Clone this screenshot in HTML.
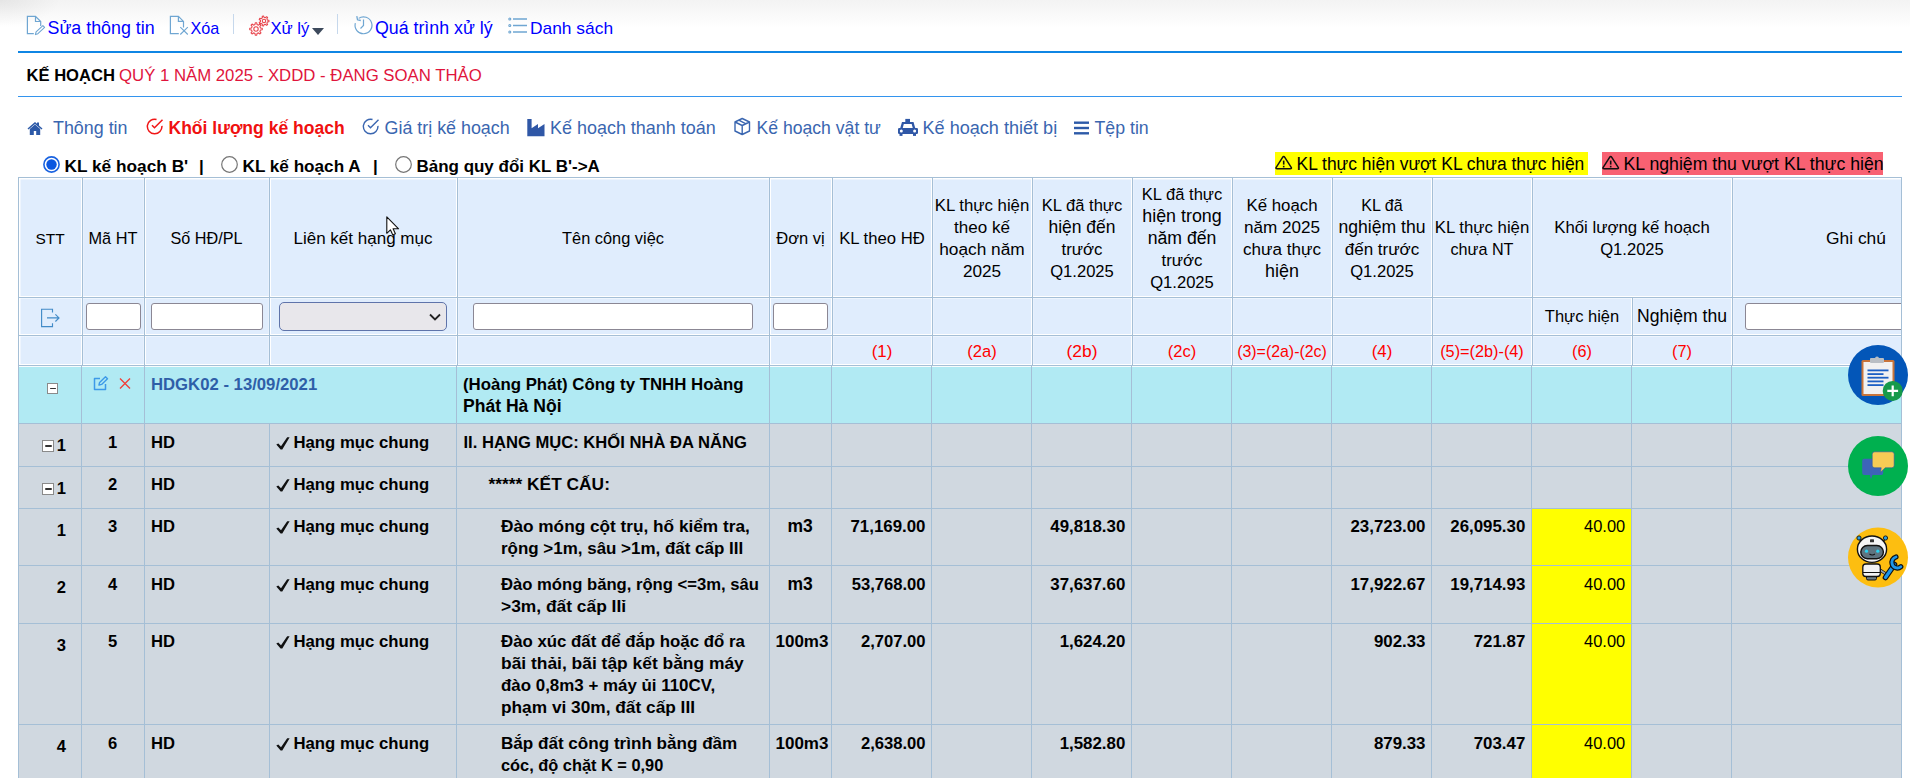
<!DOCTYPE html>
<html><head><meta charset="utf-8"><style>
html,body{margin:0;padding:0;background:#fff;width:1910px;height:778px;overflow:hidden;position:relative;font-family:"Liberation Sans",sans-serif}
.t{position:absolute;white-space:nowrap}
.r{position:absolute}
</style></head><body>
<div class="r" style="left:0;top:0;width:1910px;height:28px;background:linear-gradient(#f3f3f3,#fff)"></div>
<div class="r" style="left:0;top:0;width:60px;height:30px;background:radial-gradient(ellipse 60px 26px at 0 0,rgba(0,0,0,0.06),rgba(0,0,0,0))"></div>
<div class="t" style="left:47.5px;top:16.75px;font-size:17.84px;line-height:22px;color:#0000ff;">Sửa thông tin</div>
<div class="t" style="left:190.5px;top:16.75px;font-size:16.21px;line-height:22px;color:#0000ff;">Xóa</div>
<div class="t" style="left:270.5px;top:17.75px;font-size:16.64px;line-height:22px;color:#0000ff;">Xử lý</div>
<div class="t" style="left:375px;top:16.75px;font-size:17.78px;line-height:22px;color:#0000ff;">Quá trình xử lý</div>
<div class="t" style="left:530px;top:16.75px;font-size:17.39px;line-height:22px;color:#0000ff;">Danh sách</div>
<div class="r" style="left:233px;top:14px;width:1px;height:20px;background:#c6d8ec;"></div>
<div class="r" style="left:337px;top:14px;width:1px;height:20px;background:#c6d8ec;"></div>
<svg class="r" style="left:26px;top:15px" width="22" height="21" viewBox="0 0 22 21">
<path d="M7.8 18.6H1.4V1.3H9.5L14.7 6.5V11M9.5 1.3V6.5H14.7" fill="none" stroke="#6fa6d2" stroke-width="1.2"/>
<path d="M9.4 19.6L10.1 16.9L16.9 10.6L18.6 12.3L11.9 18.7Z" fill="none" stroke="#6fa6d2" stroke-width="1.1" stroke-linejoin="round"/>
</svg>
<svg class="r" style="left:169px;top:15px" width="21" height="21" viewBox="0 0 21 21">
<path d="M9.8 18.6H1.4V1.3H9.4L14.5 6.4V12.5M9.4 1.3V6.4H14.5" fill="none" stroke="#6fa6d2" stroke-width="1.2"/>
<path d="M11.3 12.2L18.8 19.5M18.8 12.2L11.3 19.5" fill="none" stroke="#6fa6d2" stroke-width="1.1"/>
</svg>
<svg class="r" style="left:248px;top:14px" width="24" height="24" viewBox="0 0 24 24">
<g fill="none" stroke="#e8474e" stroke-width="1.1" stroke-linejoin="round">
<path d="M12.49 14.01L14.26 14.26L14.26 15.74L12.49 15.99L11.87 17.48L12.95 18.90L11.90 19.95L10.48 18.87L8.99 19.49L8.74 21.26L7.26 21.26L7.01 19.49L5.52 18.87L4.10 19.95L3.05 18.90L4.13 17.48L3.51 15.99L1.74 15.74L1.74 14.26L3.51 14.01L4.13 12.52L3.05 11.10L4.10 10.05L5.52 11.13L7.01 10.51L7.26 8.74L8.74 8.74L8.99 10.51L10.48 11.13L11.90 10.05L12.95 11.10L11.87 12.52Z"/><circle cx="8" cy="15" r="2.2"/>
<path d="M19.49 6.12L20.95 6.33L20.95 7.67L19.49 7.88L18.86 9.18L19.61 10.46L18.56 11.29L17.49 10.28L16.08 10.60L15.55 11.98L14.24 11.68L14.37 10.21L13.24 9.31L11.83 9.75L11.24 8.55L12.47 7.72L12.47 6.28L11.24 5.45L11.83 4.25L13.24 4.69L14.37 3.79L14.24 2.32L15.55 2.02L16.08 3.40L17.49 3.72L18.56 2.71L19.61 3.54L18.86 4.82Z"/><circle cx="16" cy="7" r="1.7"/>
</g></svg>
<svg class="r" style="left:312px;top:28px" width="12" height="8" viewBox="0 0 12 8"><path d="M0 0h12L6 7z" fill="#3d4a5c"/></svg>
<svg class="r" style="left:353px;top:15px" width="21" height="21" viewBox="0 0 21 21">
<path d="M5.65 3.38A8.45 8.45 0 1 1 2.34 8.1" fill="none" stroke="#6fa6d2" stroke-width="1.2"/>
<path d="M3.8 1.2L4.5 4.8L7.8 5.5" fill="none" stroke="#6fa6d2" stroke-width="1.3"/>
<path d="M10.5 4.5V10.5L7.5 13.5" fill="none" stroke="#6fa6d2" stroke-width="1.2"/>
</svg>
<svg class="r" style="left:508px;top:16.5px" width="20" height="18" viewBox="0 0 20 18">
<g fill="none" stroke="#6fa6d2" stroke-width="1.1"><circle cx="1.8" cy="2" r="1"/><circle cx="1.8" cy="8.5" r="1"/><circle cx="1.8" cy="15" r="1"/>
<path d="M5 2h14M5 8.5h14M5 15h14" stroke-width="1.5"/></g></svg>
<div class="r" style="left:18px;top:51px;width:1884px;height:2px;background:#0f86e4;"></div>
<div class="r" style="left:18px;top:96px;width:1884px;height:1px;background:#3394ee;"></div>
<div class="t" style="left:26.5px;top:65.25px;font-size:16.59px;line-height:22px;color:#000;font-weight:700;">KẾ HOẠCH</div>
<div class="t" style="left:119px;top:65.25px;font-size:16.75px;line-height:22px;color:#e0143c;">QUÝ 1 NĂM 2025 - XDDD - ĐANG SOẠN THẢO</div>
<svg class="r" style="left:27px;top:121px" width="16" height="14" viewBox="0 0 16 14">
<path d="M8 1L0.5 7.5l1 1L8 3l6.5 5.5 1-1L12 4.5V1.5h-2v1.3z" fill="#2d5aa8"/>
<path d="M2.8 8v6h4V10h2.4v4h4V8L8 3.6z" fill="#2d5aa8"/></svg>
<div class="t" style="left:53px;top:117.25px;font-size:17.89px;line-height:22px;color:#3a66b0;">Thông tin</div>
<svg class="r" style="left:146px;top:118px" width="19" height="18" viewBox="0 0 19 18">
<path d="M15.92 7.86A7.3 7.3 0 1 1 10.54 1.45" fill="none" stroke="#f01616" stroke-width="1.5"/>
<path d="M6 7.3L8.5 9.8L16.5 1.8" fill="none" stroke="#f01616" stroke-width="1.5"/></svg>
<div class="t" style="left:168.5px;top:117.25px;font-size:17.54px;line-height:22px;color:#f01010;font-weight:700;">Khối lượng kế hoạch</div>
<svg class="r" style="left:362px;top:118px" width="19" height="18" viewBox="0 0 19 18">
<path d="M15.92 7.86A7.3 7.3 0 1 1 10.54 1.45" fill="none" stroke="#3a66b0" stroke-width="1.4"/>
<path d="M6 7.3L8.5 9.8L16.5 1.8" fill="none" stroke="#3a66b0" stroke-width="1.4"/></svg>
<div class="t" style="left:384.5px;top:117.25px;font-size:17.89px;line-height:22px;color:#3a66b0;">Giá trị kế hoạch</div>
<svg class="r" style="left:527px;top:119px" width="18" height="18" viewBox="0 0 18 18">
<path d="M0.3 0.1H4.6V9.3L11 5V9.3L17.5 5V17.3H0.3Z" fill="#2f57a6"/></svg>
<div class="t" style="left:550px;top:117.25px;font-size:17.97px;line-height:22px;color:#3a66b0;">Kế hoạch thanh toán</div>
<svg class="r" style="left:733px;top:117px" width="19" height="19" viewBox="0 0 19 19">
<path d="M9.2 1.5L16.5 5V14L9.2 17.5L2 14V5Z M2 5L9.2 8.5L16.5 5 M9.2 8.5V17.5 M5.8 3.2L13 6.8" fill="none" stroke="#3a66b0" stroke-width="1.4" stroke-linejoin="round"/></svg>
<div class="t" style="left:756.5px;top:117.25px;font-size:17.63px;line-height:22px;color:#3a66b0;">Kế hoạch vật tư</div>
<svg class="r" style="left:897px;top:118px" width="22" height="19" viewBox="0 0 22 19">
<rect x="8.3" y="0.9" width="4.7" height="3.3" fill="#2f57a6"/>
<path d="M5 4H16.5L18.3 10.2H3.2Z" fill="#2f57a6"/><path d="M6.8 6H14.7L15.8 10.2H5.7Z" fill="#fff"/>
<rect x="1" y="10" width="20" height="6" rx="1.3" fill="#2f57a6"/>
<rect x="2.5" y="15.5" width="3" height="2.4" fill="#2f57a6"/><rect x="16" y="15.5" width="3" height="2.4" fill="#2f57a6"/>
<circle cx="4.3" cy="12.9" r="1.5" fill="#fff"/><circle cx="17.6" cy="12.9" r="1.5" fill="#fff"/></svg>
<div class="t" style="left:922.5px;top:117.25px;font-size:18.09px;line-height:22px;color:#3a66b0;">Kế hoạch thiết bị</div>
<svg class="r" style="left:1074px;top:121px" width="16" height="14" viewBox="0 0 16 14">
<rect x="0" y="0.5" width="15" height="2.4" fill="#2d5aa8"/><rect x="0" y="5.8" width="15" height="2.4" fill="#2d5aa8"/><rect x="0" y="11.1" width="15" height="2.4" fill="#2d5aa8"/></svg>
<div class="t" style="left:1094.5px;top:117.25px;font-size:17.74px;line-height:22px;color:#3a66b0;">Tệp tin</div>
<svg class="r" style="left:42px;top:155px" width="19" height="19" viewBox="0 0 19 19">
<circle cx="9.5" cy="9.5" r="7.6" fill="#fff" stroke="#1a63e0" stroke-width="1.6"/><circle cx="9.5" cy="9.5" r="5.2" fill="#0b57e0"/></svg>
<div class="t" style="left:64.5px;top:155.25px;font-size:17.27px;line-height:22px;color:#000;font-weight:700;">KL kế hoạch B'</div>
<div class="t" style="left:199px;top:156.25px;font-size:17px;line-height:22px;color:#000;font-weight:700;">|</div>
<svg class="r" style="left:220px;top:155px" width="19" height="19" viewBox="0 0 19 19">
<circle cx="9.5" cy="9.5" r="7.8" fill="#fff" stroke="#767676" stroke-width="1.2"/></svg>
<div class="t" style="left:242.5px;top:155.25px;font-size:17.15px;line-height:22px;color:#000;font-weight:700;">KL kế hoạch A</div>
<div class="t" style="left:373px;top:156.25px;font-size:17px;line-height:22px;color:#000;font-weight:700;">|</div>
<svg class="r" style="left:394px;top:155px" width="19" height="19" viewBox="0 0 19 19">
<circle cx="9.5" cy="9.5" r="7.8" fill="#fff" stroke="#767676" stroke-width="1.2"/></svg>
<div class="t" style="left:416.5px;top:156.25px;font-size:16.98px;line-height:22px;color:#000;font-weight:700;">Bảng quy đổi KL B'-&gt;A</div>
<div class="r" style="left:1275px;top:152px;width:313px;height:23px;background:#ffff00;"></div>
<svg class="r" style="left:1275px;top:155px" width="18" height="16" viewBox="0 0 18 16">
<path d="M7.6 2.3Q8.7 0.6 9.8 2.3L16.2 12.3Q17 13.8 15.3 13.8H2.1Q0.4 13.8 1.2 12.3Z" fill="none" stroke="#111" stroke-width="1.5" stroke-linejoin="round"/><path d="M8.7 5.6V9.6" stroke="#111" stroke-width="1.6"/><rect x="7.9" y="10.8" width="1.6" height="1.6" fill="#111"/></svg>
<div class="t" style="left:1296.5px;top:153.25px;font-size:17.47px;line-height:22px;color:#000;">KL thực hiện vượt KL chưa thực hiện</div>
<div class="r" style="left:1602px;top:152px;width:281px;height:23px;background:#f86172;"></div>
<svg class="r" style="left:1602px;top:155px" width="18" height="16" viewBox="0 0 18 16">
<path d="M7.6 2.3Q8.7 0.6 9.8 2.3L16.2 12.3Q17 13.8 15.3 13.8H2.1Q0.4 13.8 1.2 12.3Z" fill="none" stroke="#111" stroke-width="1.5" stroke-linejoin="round"/><path d="M8.7 5.6V9.6" stroke="#111" stroke-width="1.6"/><rect x="7.9" y="10.8" width="1.6" height="1.6" fill="#111"/></svg>
<div class="t" style="left:1623.5px;top:153.25px;font-size:17.7px;line-height:22px;color:#000;">KL nghiệm thu vượt KL thực hiện</div>
<div class="r" style="left:18px;top:177px;width:1883px;height:188px;background:#e0edfd;"></div>
<div class="r" style="left:18px;top:366px;width:1883px;height:58px;background:#b1eaf3;"></div>
<div class="r" style="left:18px;top:424px;width:1883px;height:43px;background:#d0d8e0;"></div>
<div class="r" style="left:18px;top:467px;width:1883px;height:42px;background:#d0d8e0;"></div>
<div class="r" style="left:18px;top:509px;width:1883px;height:57px;background:#d0d8e0;"></div>
<div class="r" style="left:18px;top:566px;width:1883px;height:58px;background:#d0d8e0;"></div>
<div class="r" style="left:18px;top:624px;width:1883px;height:101px;background:#d0d8e0;"></div>
<div class="r" style="left:18px;top:725px;width:1883px;height:156px;background:#d0d8e0;"></div>
<div class="r" style="left:1532px;top:509px;width:99px;height:56px;background:#ffff00;"></div>
<div class="r" style="left:1532px;top:566px;width:99px;height:57px;background:#ffff00;"></div>
<div class="r" style="left:1532px;top:624px;width:99px;height:100px;background:#ffff00;"></div>
<div class="r" style="left:1532px;top:725px;width:99px;height:155px;background:#ffff00;"></div>
<div class="r" style="left:81px;top:178px;width:1px;height:187px;background:#ffffff;"></div>
<div class="r" style="left:83px;top:178px;width:1px;height:187px;background:rgba(255,255,255,0.25);"></div>
<div class="r" style="left:145px;top:178px;width:1px;height:187px;background:#ffffff;"></div>
<div class="r" style="left:143px;top:178px;width:1px;height:187px;background:rgba(255,255,255,0.25);"></div>
<div class="r" style="left:270px;top:178px;width:1px;height:187px;background:#ffffff;"></div>
<div class="r" style="left:268px;top:178px;width:1px;height:187px;background:rgba(255,255,255,0.25);"></div>
<div class="r" style="left:456px;top:178px;width:1px;height:187px;background:#ffffff;"></div>
<div class="r" style="left:458px;top:178px;width:1px;height:187px;background:rgba(255,255,255,0.25);"></div>
<div class="r" style="left:770px;top:178px;width:1px;height:187px;background:#ffffff;"></div>
<div class="r" style="left:768px;top:178px;width:1px;height:187px;background:rgba(255,255,255,0.25);"></div>
<div class="r" style="left:831px;top:178px;width:1px;height:187px;background:#ffffff;"></div>
<div class="r" style="left:833px;top:178px;width:1px;height:187px;background:rgba(255,255,255,0.25);"></div>
<div class="r" style="left:931px;top:178px;width:1px;height:187px;background:#ffffff;"></div>
<div class="r" style="left:933px;top:178px;width:1px;height:187px;background:rgba(255,255,255,0.25);"></div>
<div class="r" style="left:1031px;top:178px;width:1px;height:187px;background:#ffffff;"></div>
<div class="r" style="left:1033px;top:178px;width:1px;height:187px;background:rgba(255,255,255,0.25);"></div>
<div class="r" style="left:1131px;top:178px;width:1px;height:187px;background:#ffffff;"></div>
<div class="r" style="left:1133px;top:178px;width:1px;height:187px;background:rgba(255,255,255,0.25);"></div>
<div class="r" style="left:1231px;top:178px;width:1px;height:187px;background:#ffffff;"></div>
<div class="r" style="left:1233px;top:178px;width:1px;height:187px;background:rgba(255,255,255,0.25);"></div>
<div class="r" style="left:1331px;top:178px;width:1px;height:187px;background:#ffffff;"></div>
<div class="r" style="left:1333px;top:178px;width:1px;height:187px;background:rgba(255,255,255,0.25);"></div>
<div class="r" style="left:1431px;top:178px;width:1px;height:187px;background:#ffffff;"></div>
<div class="r" style="left:1433px;top:178px;width:1px;height:187px;background:rgba(255,255,255,0.25);"></div>
<div class="r" style="left:1531px;top:178px;width:1px;height:187px;background:#ffffff;"></div>
<div class="r" style="left:1533px;top:178px;width:1px;height:187px;background:rgba(255,255,255,0.25);"></div>
<div class="r" style="left:1631px;top:297px;width:1px;height:68px;background:#ffffff;"></div>
<div class="r" style="left:1633px;top:297px;width:1px;height:68px;background:rgba(255,255,255,0.25);"></div>
<div class="r" style="left:1731px;top:178px;width:1px;height:187px;background:#ffffff;"></div>
<div class="r" style="left:1733px;top:178px;width:1px;height:187px;background:rgba(255,255,255,0.25);"></div>
<div class="r" style="left:19px;top:296px;width:1882px;height:1px;background:#ffffff;"></div>
<div class="r" style="left:19px;top:298px;width:1882px;height:1px;background:rgba(255,255,255,0.45);"></div>
<div class="r" style="left:19px;top:334px;width:1882px;height:1px;background:#ffffff;"></div>
<div class="r" style="left:19px;top:336px;width:1882px;height:1px;background:rgba(255,255,255,0.45);"></div>
<div class="r" style="left:19px;top:364px;width:1882px;height:1px;background:#ffffff;"></div>
<div class="r" style="left:19px;top:366px;width:1882px;height:1px;background:rgba(255,255,255,0.9);"></div>
<div class="r" style="left:19px;top:178px;width:1882px;height:1px;background:#ffffff;"></div>
<div class="r" style="left:19px;top:179px;width:1882px;height:1px;background:rgba(255,255,255,0.45);"></div>
<div class="r" style="left:19px;top:178px;width:1px;height:187px;background:#ffffff;"></div>
<div class="r" style="left:20px;top:178px;width:1px;height:187px;background:rgba(255,255,255,0.45);"></div>
<div class="r" style="left:18px;top:177px;width:1884px;height:1px;background:#a5bfd6;"></div>
<div class="r" style="left:18px;top:177px;width:1px;height:601px;background:#a5bfd6;"></div>
<div class="r" style="left:1901px;top:177px;width:1px;height:601px;background:#a5bfd6;"></div>
<div class="r" style="left:18px;top:297px;width:1883px;height:1px;background:#a5bfd6;"></div>
<div class="r" style="left:18px;top:335px;width:1883px;height:1px;background:#a5bfd6;"></div>
<div class="r" style="left:18px;top:365px;width:1883px;height:1px;background:#a5bfd6;"></div>
<div class="r" style="left:82px;top:177px;width:1px;height:188px;background:#a5bfd6;"></div>
<div class="r" style="left:144px;top:177px;width:1px;height:188px;background:#a5bfd6;"></div>
<div class="r" style="left:269px;top:177px;width:1px;height:188px;background:#a5bfd6;"></div>
<div class="r" style="left:457px;top:177px;width:1px;height:188px;background:#a5bfd6;"></div>
<div class="r" style="left:769px;top:177px;width:1px;height:188px;background:#a5bfd6;"></div>
<div class="r" style="left:832px;top:177px;width:1px;height:188px;background:#a5bfd6;"></div>
<div class="r" style="left:932px;top:177px;width:1px;height:188px;background:#a5bfd6;"></div>
<div class="r" style="left:1032px;top:177px;width:1px;height:188px;background:#a5bfd6;"></div>
<div class="r" style="left:1132px;top:177px;width:1px;height:188px;background:#a5bfd6;"></div>
<div class="r" style="left:1232px;top:177px;width:1px;height:188px;background:#a5bfd6;"></div>
<div class="r" style="left:1332px;top:177px;width:1px;height:188px;background:#a5bfd6;"></div>
<div class="r" style="left:1432px;top:177px;width:1px;height:188px;background:#a5bfd6;"></div>
<div class="r" style="left:1532px;top:177px;width:1px;height:188px;background:#a5bfd6;"></div>
<div class="r" style="left:1632px;top:297px;width:1px;height:68px;background:#a5bfd6;"></div>
<div class="r" style="left:1732px;top:177px;width:1px;height:188px;background:#a5bfd6;"></div>
<div class="r" style="left:81px;top:365px;width:1px;height:58px;background:#a5bfd6;"></div>
<div class="r" style="left:144px;top:365px;width:1px;height:58px;background:#a5bfd6;"></div>
<div class="r" style="left:456px;top:365px;width:1px;height:58px;background:#a5bfd6;"></div>
<div class="r" style="left:769px;top:365px;width:1px;height:58px;background:#a5bfd6;"></div>
<div class="r" style="left:831px;top:365px;width:1px;height:58px;background:#a5bfd6;"></div>
<div class="r" style="left:931px;top:365px;width:1px;height:58px;background:#a5bfd6;"></div>
<div class="r" style="left:1031px;top:365px;width:1px;height:58px;background:#a5bfd6;"></div>
<div class="r" style="left:1131px;top:365px;width:1px;height:58px;background:#a5bfd6;"></div>
<div class="r" style="left:1231px;top:365px;width:1px;height:58px;background:#a5bfd6;"></div>
<div class="r" style="left:1331px;top:365px;width:1px;height:58px;background:#a5bfd6;"></div>
<div class="r" style="left:1431px;top:365px;width:1px;height:58px;background:#a5bfd6;"></div>
<div class="r" style="left:1531px;top:365px;width:1px;height:58px;background:#a5bfd6;"></div>
<div class="r" style="left:1631px;top:365px;width:1px;height:58px;background:#a5bfd6;"></div>
<div class="r" style="left:1731px;top:365px;width:1px;height:58px;background:#a5bfd6;"></div>
<div class="r" style="left:81px;top:423px;width:1px;height:43px;background:#a5bfd6;"></div>
<div class="r" style="left:144px;top:423px;width:1px;height:43px;background:#a5bfd6;"></div>
<div class="r" style="left:269px;top:423px;width:1px;height:43px;background:#a5bfd6;"></div>
<div class="r" style="left:456px;top:423px;width:1px;height:43px;background:#a5bfd6;"></div>
<div class="r" style="left:769px;top:423px;width:1px;height:43px;background:#a5bfd6;"></div>
<div class="r" style="left:831px;top:423px;width:1px;height:43px;background:#a5bfd6;"></div>
<div class="r" style="left:931px;top:423px;width:1px;height:43px;background:#a5bfd6;"></div>
<div class="r" style="left:1031px;top:423px;width:1px;height:43px;background:#a5bfd6;"></div>
<div class="r" style="left:1131px;top:423px;width:1px;height:43px;background:#a5bfd6;"></div>
<div class="r" style="left:1231px;top:423px;width:1px;height:43px;background:#a5bfd6;"></div>
<div class="r" style="left:1331px;top:423px;width:1px;height:43px;background:#a5bfd6;"></div>
<div class="r" style="left:1431px;top:423px;width:1px;height:43px;background:#a5bfd6;"></div>
<div class="r" style="left:1531px;top:423px;width:1px;height:43px;background:#a5bfd6;"></div>
<div class="r" style="left:1631px;top:423px;width:1px;height:43px;background:#a5bfd6;"></div>
<div class="r" style="left:1731px;top:423px;width:1px;height:43px;background:#a5bfd6;"></div>
<div class="r" style="left:81px;top:466px;width:1px;height:42px;background:#a5bfd6;"></div>
<div class="r" style="left:144px;top:466px;width:1px;height:42px;background:#a5bfd6;"></div>
<div class="r" style="left:269px;top:466px;width:1px;height:42px;background:#a5bfd6;"></div>
<div class="r" style="left:456px;top:466px;width:1px;height:42px;background:#a5bfd6;"></div>
<div class="r" style="left:769px;top:466px;width:1px;height:42px;background:#a5bfd6;"></div>
<div class="r" style="left:831px;top:466px;width:1px;height:42px;background:#a5bfd6;"></div>
<div class="r" style="left:931px;top:466px;width:1px;height:42px;background:#a5bfd6;"></div>
<div class="r" style="left:1031px;top:466px;width:1px;height:42px;background:#a5bfd6;"></div>
<div class="r" style="left:1131px;top:466px;width:1px;height:42px;background:#a5bfd6;"></div>
<div class="r" style="left:1231px;top:466px;width:1px;height:42px;background:#a5bfd6;"></div>
<div class="r" style="left:1331px;top:466px;width:1px;height:42px;background:#a5bfd6;"></div>
<div class="r" style="left:1431px;top:466px;width:1px;height:42px;background:#a5bfd6;"></div>
<div class="r" style="left:1531px;top:466px;width:1px;height:42px;background:#a5bfd6;"></div>
<div class="r" style="left:1631px;top:466px;width:1px;height:42px;background:#a5bfd6;"></div>
<div class="r" style="left:1731px;top:466px;width:1px;height:42px;background:#a5bfd6;"></div>
<div class="r" style="left:81px;top:508px;width:1px;height:57px;background:#a5bfd6;"></div>
<div class="r" style="left:144px;top:508px;width:1px;height:57px;background:#a5bfd6;"></div>
<div class="r" style="left:269px;top:508px;width:1px;height:57px;background:#a5bfd6;"></div>
<div class="r" style="left:456px;top:508px;width:1px;height:57px;background:#a5bfd6;"></div>
<div class="r" style="left:769px;top:508px;width:1px;height:57px;background:#a5bfd6;"></div>
<div class="r" style="left:831px;top:508px;width:1px;height:57px;background:#a5bfd6;"></div>
<div class="r" style="left:931px;top:508px;width:1px;height:57px;background:#a5bfd6;"></div>
<div class="r" style="left:1031px;top:508px;width:1px;height:57px;background:#a5bfd6;"></div>
<div class="r" style="left:1131px;top:508px;width:1px;height:57px;background:#a5bfd6;"></div>
<div class="r" style="left:1231px;top:508px;width:1px;height:57px;background:#a5bfd6;"></div>
<div class="r" style="left:1331px;top:508px;width:1px;height:57px;background:#a5bfd6;"></div>
<div class="r" style="left:1431px;top:508px;width:1px;height:57px;background:#a5bfd6;"></div>
<div class="r" style="left:1531px;top:508px;width:1px;height:57px;background:#a5bfd6;"></div>
<div class="r" style="left:1631px;top:508px;width:1px;height:57px;background:#a5bfd6;"></div>
<div class="r" style="left:1731px;top:508px;width:1px;height:57px;background:#a5bfd6;"></div>
<div class="r" style="left:81px;top:565px;width:1px;height:58px;background:#a5bfd6;"></div>
<div class="r" style="left:144px;top:565px;width:1px;height:58px;background:#a5bfd6;"></div>
<div class="r" style="left:269px;top:565px;width:1px;height:58px;background:#a5bfd6;"></div>
<div class="r" style="left:456px;top:565px;width:1px;height:58px;background:#a5bfd6;"></div>
<div class="r" style="left:769px;top:565px;width:1px;height:58px;background:#a5bfd6;"></div>
<div class="r" style="left:831px;top:565px;width:1px;height:58px;background:#a5bfd6;"></div>
<div class="r" style="left:931px;top:565px;width:1px;height:58px;background:#a5bfd6;"></div>
<div class="r" style="left:1031px;top:565px;width:1px;height:58px;background:#a5bfd6;"></div>
<div class="r" style="left:1131px;top:565px;width:1px;height:58px;background:#a5bfd6;"></div>
<div class="r" style="left:1231px;top:565px;width:1px;height:58px;background:#a5bfd6;"></div>
<div class="r" style="left:1331px;top:565px;width:1px;height:58px;background:#a5bfd6;"></div>
<div class="r" style="left:1431px;top:565px;width:1px;height:58px;background:#a5bfd6;"></div>
<div class="r" style="left:1531px;top:565px;width:1px;height:58px;background:#a5bfd6;"></div>
<div class="r" style="left:1631px;top:565px;width:1px;height:58px;background:#a5bfd6;"></div>
<div class="r" style="left:1731px;top:565px;width:1px;height:58px;background:#a5bfd6;"></div>
<div class="r" style="left:81px;top:623px;width:1px;height:101px;background:#a5bfd6;"></div>
<div class="r" style="left:144px;top:623px;width:1px;height:101px;background:#a5bfd6;"></div>
<div class="r" style="left:269px;top:623px;width:1px;height:101px;background:#a5bfd6;"></div>
<div class="r" style="left:456px;top:623px;width:1px;height:101px;background:#a5bfd6;"></div>
<div class="r" style="left:769px;top:623px;width:1px;height:101px;background:#a5bfd6;"></div>
<div class="r" style="left:831px;top:623px;width:1px;height:101px;background:#a5bfd6;"></div>
<div class="r" style="left:931px;top:623px;width:1px;height:101px;background:#a5bfd6;"></div>
<div class="r" style="left:1031px;top:623px;width:1px;height:101px;background:#a5bfd6;"></div>
<div class="r" style="left:1131px;top:623px;width:1px;height:101px;background:#a5bfd6;"></div>
<div class="r" style="left:1231px;top:623px;width:1px;height:101px;background:#a5bfd6;"></div>
<div class="r" style="left:1331px;top:623px;width:1px;height:101px;background:#a5bfd6;"></div>
<div class="r" style="left:1431px;top:623px;width:1px;height:101px;background:#a5bfd6;"></div>
<div class="r" style="left:1531px;top:623px;width:1px;height:101px;background:#a5bfd6;"></div>
<div class="r" style="left:1631px;top:623px;width:1px;height:101px;background:#a5bfd6;"></div>
<div class="r" style="left:1731px;top:623px;width:1px;height:101px;background:#a5bfd6;"></div>
<div class="r" style="left:81px;top:724px;width:1px;height:156px;background:#a5bfd6;"></div>
<div class="r" style="left:144px;top:724px;width:1px;height:156px;background:#a5bfd6;"></div>
<div class="r" style="left:269px;top:724px;width:1px;height:156px;background:#a5bfd6;"></div>
<div class="r" style="left:456px;top:724px;width:1px;height:156px;background:#a5bfd6;"></div>
<div class="r" style="left:769px;top:724px;width:1px;height:156px;background:#a5bfd6;"></div>
<div class="r" style="left:831px;top:724px;width:1px;height:156px;background:#a5bfd6;"></div>
<div class="r" style="left:931px;top:724px;width:1px;height:156px;background:#a5bfd6;"></div>
<div class="r" style="left:1031px;top:724px;width:1px;height:156px;background:#a5bfd6;"></div>
<div class="r" style="left:1131px;top:724px;width:1px;height:156px;background:#a5bfd6;"></div>
<div class="r" style="left:1231px;top:724px;width:1px;height:156px;background:#a5bfd6;"></div>
<div class="r" style="left:1331px;top:724px;width:1px;height:156px;background:#a5bfd6;"></div>
<div class="r" style="left:1431px;top:724px;width:1px;height:156px;background:#a5bfd6;"></div>
<div class="r" style="left:1531px;top:724px;width:1px;height:156px;background:#a5bfd6;"></div>
<div class="r" style="left:1631px;top:724px;width:1px;height:156px;background:#a5bfd6;"></div>
<div class="r" style="left:1731px;top:724px;width:1px;height:156px;background:#a5bfd6;"></div>
<div class="r" style="left:18px;top:423px;width:1883px;height:1px;background:#a5bfd6;"></div>
<div class="r" style="left:18px;top:466px;width:1883px;height:1px;background:#a5bfd6;"></div>
<div class="r" style="left:18px;top:508px;width:1883px;height:1px;background:#a5bfd6;"></div>
<div class="r" style="left:18px;top:565px;width:1883px;height:1px;background:#a5bfd6;"></div>
<div class="r" style="left:18px;top:623px;width:1883px;height:1px;background:#a5bfd6;"></div>
<div class="r" style="left:18px;top:724px;width:1883px;height:1px;background:#a5bfd6;"></div>
<div class="t" style="left:18px;top:228.25px;font-size:15.46px;line-height:22px;color:#000;width:64px;text-align:center;">STT</div>
<div class="t" style="left:82px;top:227.25px;font-size:16.32px;line-height:22px;color:#000;width:62px;text-align:center;">Mã HT</div>
<div class="t" style="left:144px;top:227.25px;font-size:16.2px;line-height:22px;color:#000;width:125px;text-align:center;">Số HĐ/PL</div>
<div class="t" style="left:269px;top:228.25px;font-size:17.02px;line-height:22px;color:#000;width:188px;text-align:center;">Liên kết hạng mục</div>
<div class="t" style="left:457px;top:227.25px;font-size:16.38px;line-height:22px;color:#000;width:312px;text-align:center;">Tên công việc</div>
<div class="t" style="left:769px;top:228.25px;font-size:16.52px;line-height:22px;color:#000;width:63px;text-align:center;">Đơn vị</div>
<div class="t" style="left:832px;top:228.25px;font-size:16.68px;line-height:22px;color:#000;width:100px;text-align:center;">KL theo HĐ</div>
<div class="t" style="left:932px;top:195.25px;font-size:16.8px;line-height:22px;color:#000;width:100px;text-align:center;">KL thực hiện</div>
<div class="t" style="left:932px;top:217.25px;font-size:17.05px;line-height:22px;color:#000;width:100px;text-align:center;">theo kế</div>
<div class="t" style="left:932px;top:238.25px;font-size:17.3px;line-height:22px;color:#000;width:100px;text-align:center;">hoạch năm</div>
<div class="t" style="left:932px;top:260.25px;font-size:17.18px;line-height:22px;color:#000;width:100px;text-align:center;">2025</div>
<div class="t" style="left:1032px;top:195.25px;font-size:16.59px;line-height:22px;color:#000;width:100px;text-align:center;">KL đã thực</div>
<div class="t" style="left:1032px;top:216.25px;font-size:17.45px;line-height:22px;color:#000;width:100px;text-align:center;">hiện đến</div>
<div class="t" style="left:1032px;top:239.25px;font-size:16.81px;line-height:22px;color:#000;width:100px;text-align:center;">trước</div>
<div class="t" style="left:1032px;top:261.25px;font-size:16.59px;line-height:22px;color:#000;width:100px;text-align:center;">Q1.2025</div>
<div class="t" style="left:1132px;top:184.25px;font-size:16.59px;line-height:22px;color:#000;width:100px;text-align:center;">KL đã thực</div>
<div class="t" style="left:1132px;top:205.25px;font-size:17.86px;line-height:22px;color:#000;width:100px;text-align:center;">hiện trong</div>
<div class="t" style="left:1132px;top:227.25px;font-size:17.65px;line-height:22px;color:#000;width:100px;text-align:center;">năm đến</div>
<div class="t" style="left:1132px;top:250.25px;font-size:16.81px;line-height:22px;color:#000;width:100px;text-align:center;">trước</div>
<div class="t" style="left:1132px;top:272.25px;font-size:16.59px;line-height:22px;color:#000;width:100px;text-align:center;">Q1.2025</div>
<div class="t" style="left:1232px;top:195.25px;font-size:16.85px;line-height:22px;color:#000;width:100px;text-align:center;">Kế hoạch</div>
<div class="t" style="left:1232px;top:217.25px;font-size:17.12px;line-height:22px;color:#000;width:100px;text-align:center;">năm 2025</div>
<div class="t" style="left:1232px;top:239.25px;font-size:17.07px;line-height:22px;color:#000;width:100px;text-align:center;">chưa thực</div>
<div class="t" style="left:1232px;top:260.25px;font-size:17.93px;line-height:22px;color:#000;width:100px;text-align:center;">hiện</div>
<div class="t" style="left:1332px;top:194.25px;font-size:16.1px;line-height:22px;color:#000;width:100px;text-align:center;">KL đã</div>
<div class="t" style="left:1332px;top:216.25px;font-size:17.59px;line-height:22px;color:#000;width:100px;text-align:center;">nghiệm thu</div>
<div class="t" style="left:1332px;top:239.25px;font-size:17.03px;line-height:22px;color:#000;width:100px;text-align:center;">đến trước</div>
<div class="t" style="left:1332px;top:261.25px;font-size:16.59px;line-height:22px;color:#000;width:100px;text-align:center;">Q1.2025</div>
<div class="t" style="left:1432px;top:217.25px;font-size:16.8px;line-height:22px;color:#000;width:100px;text-align:center;">KL thực hiện</div>
<div class="t" style="left:1432px;top:238.25px;font-size:16.22px;line-height:22px;color:#000;width:100px;text-align:center;">chưa NT</div>
<div class="t" style="left:1532px;top:217.25px;font-size:16.78px;line-height:22px;color:#000;width:200px;text-align:center;">Khối lượng kế hoạch</div>
<div class="t" style="left:1532px;top:239.25px;font-size:16.59px;line-height:22px;color:#000;width:200px;text-align:center;">Q1.2025</div>
<div class="t" style="left:1732px;top:227.25px;font-size:17.4px;line-height:22px;color:#000;width:248px;text-align:center;">Ghi chú</div>
<svg class="r" style="left:40px;top:308px" width="21" height="20" viewBox="0 0 21 20">
<path d="M12.5 4.6V1.2H1.6V18.6H12.5V15.2" fill="none" stroke="#428bc8" stroke-width="1.15"/><path d="M7 9.9H19M15.4 6.4L19 9.9L15.4 13.5" fill="none" stroke="#428bc8" stroke-width="1.15"/></svg>
<div class="r" style="left:86px;top:303px;width:53px;height:25px;background:#fff;border:1px solid #8b8794;border-radius:3px"></div>
<div class="r" style="left:151px;top:303px;width:110px;height:25px;background:#fff;border:1px solid #8b8794;border-radius:3px"></div>
<div class="r" style="left:279px;top:302px;width:168px;height:29px;box-sizing:border-box;background:#e8e7eb;border:1.5px solid #5f74aa;border-radius:5px"></div>
<svg class="r" style="left:429px;top:313px" width="12" height="9" viewBox="0 0 12 9"><path d="M1 1.5l5 5 5-5" fill="none" stroke="#222" stroke-width="1.8"/></svg>
<div class="r" style="left:473px;top:303px;width:278px;height:25px;background:#fff;border:1px solid #8b8794;border-radius:3px"></div>
<div class="r" style="left:773px;top:303px;width:53px;height:25px;background:#fff;border:1px solid #8b8794;border-radius:3px"></div>
<div class="r" style="left:1745px;top:303px;width:258px;height:25px;background:#fff;border:1px solid #8b8794;border-radius:3px"></div>
<div class="t" style="left:1532px;top:306.25px;font-size:16.53px;line-height:22px;color:#000;width:100px;text-align:center;">Thực hiện</div>
<div class="t" style="left:1632px;top:305.25px;font-size:17.6px;line-height:22px;color:#000;width:100px;text-align:center;">Nghiệm thu</div>
<div class="t" style="left:832px;top:341.25px;font-size:16.82px;line-height:22px;color:#ff0000;width:100px;text-align:center;">(1)</div>
<div class="t" style="left:932px;top:341.25px;font-size:16.56px;line-height:22px;color:#ff0000;width:100px;text-align:center;">(2a)</div>
<div class="t" style="left:1032px;top:340.25px;font-size:17.4px;line-height:22px;color:#ff0000;width:100px;text-align:center;">(2b)</div>
<div class="t" style="left:1132px;top:341.25px;font-size:16.56px;line-height:22px;color:#ff0000;width:100px;text-align:center;">(2c)</div>
<div class="t" style="left:1232px;top:341.25px;font-size:15.9px;line-height:22px;color:#ff0000;width:100px;text-align:center;">(3)=(2a)-(2c)</div>
<div class="t" style="left:1332px;top:341.25px;font-size:16.82px;line-height:22px;color:#ff0000;width:100px;text-align:center;">(4)</div>
<div class="t" style="left:1432px;top:340.25px;font-size:16.28px;line-height:22px;color:#ff0000;width:100px;text-align:center;">(5)=(2b)-(4)</div>
<div class="t" style="left:1532px;top:340.25px;font-size:16.27px;line-height:22px;color:#ff0000;width:100px;text-align:center;">(6)</div>
<div class="t" style="left:1632px;top:340.25px;font-size:16.27px;line-height:22px;color:#ff0000;width:100px;text-align:center;">(7)</div>
<div class="r" style="left:47px;top:383px;width:11px;height:11px;border:1.3px solid #8a8a8a;background:#fff;box-sizing:border-box"></div>
<div class="r" style="left:49.5px;top:387.7px;width:6px;height:1.6px;background:#333;border-radius:1px"></div>
<svg class="r" style="left:92px;top:376px" width="17" height="15" viewBox="0 0 17 15">
<path d="M8 2.5H2.5v11h11V8" fill="none" stroke="#3d9ae8" stroke-width="1.5" stroke-linejoin="round"/>
<path d="M7 9l0.6-2.6L13.5 0.8l2 2-5.9 5.6z" fill="none" stroke="#3d9ae8" stroke-width="1.4" stroke-linejoin="round"/></svg>
<svg class="r" style="left:119px;top:378px" width="12" height="11" viewBox="0 0 12 11"><path d="M1 0.5l10 10M11 0.5l-10 10" stroke="#f0403a" stroke-width="1.4"/></svg>
<div class="t" style="left:151px;top:374.25px;font-size:16.72px;line-height:22px;color:#2e5ea8;font-weight:700;">HDGK02 - 13/09/2021</div>
<div class="t" style="left:463px;top:374.25px;font-size:16.84px;line-height:22px;color:#000;font-weight:700;">(Hoàng Phát) Công ty TNHH Hoàng</div>
<div class="t" style="left:463px;top:395.25px;font-size:17.57px;line-height:22px;color:#000;font-weight:700;">Phát Hà Nội</div>
<div class="r" style="left:42px;top:440px;width:12px;height:12px;border:1.3px solid #8a8a8a;background:#fff;box-sizing:border-box"></div>
<div class="r" style="left:44.5px;top:445.2px;width:7px;height:1.6px;background:#333;border-radius:1px"></div>
<div class="t" style="left:26px;top:434.75px;width:40px;text-align:right;font-size:16.6px;line-height:22px;color:#000;font-weight:700;">1</div>
<div class="t" style="left:81px;top:432.25px;font-size:16.6px;line-height:22px;color:#000;font-weight:700;width:63px;text-align:center;">1</div>
<div class="t" style="left:151px;top:432.25px;font-size:16.6px;line-height:22px;color:#000;font-weight:700;">HD</div>
<svg class="r" style="left:276px;top:436.5px" width="14" height="13" viewBox="0 0 14 13"><path d="M0.3 7.6L2.3 6.4L5 9.2L11.2 0.3H13.6L6.3 12.6H4.6Z" fill="#111"/></svg>
<div class="t" style="left:293.5px;top:432.25px;font-size:16.73px;line-height:22px;color:#000;font-weight:700;">Hạng mục chung</div>
<div class="t" style="left:463.5px;top:432.25px;font-size:16.6px;line-height:22px;color:#000;font-weight:700;">II. HẠNG MỤC: KHỐI NHÀ ĐA NĂNG</div>
<div class="r" style="left:42px;top:483px;width:12px;height:12px;border:1.3px solid #8a8a8a;background:#fff;box-sizing:border-box"></div>
<div class="r" style="left:44.5px;top:488.2px;width:7px;height:1.6px;background:#333;border-radius:1px"></div>
<div class="t" style="left:26px;top:477.75px;width:40px;text-align:right;font-size:16.6px;line-height:22px;color:#000;font-weight:700;">1</div>
<div class="t" style="left:81px;top:474.25px;font-size:16.6px;line-height:22px;color:#000;font-weight:700;width:63px;text-align:center;">2</div>
<div class="t" style="left:151px;top:474.25px;font-size:16.6px;line-height:22px;color:#000;font-weight:700;">HD</div>
<svg class="r" style="left:276px;top:478.5px" width="14" height="13" viewBox="0 0 14 13"><path d="M0.3 7.6L2.3 6.4L5 9.2L11.2 0.3H13.6L6.3 12.6H4.6Z" fill="#111"/></svg>
<div class="t" style="left:293.5px;top:474.25px;font-size:16.73px;line-height:22px;color:#000;font-weight:700;">Hạng mục chung</div>
<div class="t" style="left:488.5px;top:473.25px;font-size:17.35px;line-height:22px;color:#000;font-weight:700;">***** KẾT CẤU:</div>
<div class="t" style="left:26px;top:519.75px;width:40px;text-align:right;font-size:16.6px;line-height:22px;color:#000;font-weight:700;">1</div>
<div class="t" style="left:81px;top:516.25px;font-size:16.6px;line-height:22px;color:#000;font-weight:700;width:63px;text-align:center;">3</div>
<div class="t" style="left:151px;top:516.25px;font-size:16.6px;line-height:22px;color:#000;font-weight:700;">HD</div>
<svg class="r" style="left:276px;top:520.5px" width="14" height="13" viewBox="0 0 14 13"><path d="M0.3 7.6L2.3 6.4L5 9.2L11.2 0.3H13.6L6.3 12.6H4.6Z" fill="#111"/></svg>
<div class="t" style="left:293.5px;top:516.25px;font-size:16.73px;line-height:22px;color:#000;font-weight:700;">Hạng mục chung</div>
<div class="t" style="left:501px;top:515.25px;font-size:17.23px;line-height:22px;color:#000;font-weight:700;">Đào móng cột trụ, hố kiểm tra,</div>
<div class="t" style="left:501px;top:538.25px;font-size:16.97px;line-height:22px;color:#000;font-weight:700;">rộng &gt;1m, sâu &gt;1m, đất cấp III</div>
<div class="t" style="left:769px;top:515.25px;font-size:17.48px;line-height:22px;color:#000;font-weight:700;width:62px;text-align:center;">m3</div>
<div class="t" style="left:830.5px;top:516.25px;width:95px;text-align:right;font-size:16.88px;line-height:22px;color:#000;font-weight:700;">71,169.00</div>
<div class="t" style="left:1030.3px;top:516.25px;width:95px;text-align:right;font-size:16.877413068031505px;line-height:22px;color:#000;font-weight:700;">49,818.30</div>
<div class="t" style="left:1330.5px;top:516.25px;width:95px;text-align:right;font-size:16.877413068031505px;line-height:22px;color:#000;font-weight:700;">23,723.00</div>
<div class="t" style="left:1430.3px;top:516.25px;width:95px;text-align:right;font-size:16.877413068031505px;line-height:22px;color:#000;font-weight:700;">26,095.30</div>
<div class="t" style="left:1530.2px;top:515.25px;width:95px;text-align:right;font-size:16.44px;line-height:22px;color:#000;">40.00</div>
<div class="t" style="left:26px;top:576.75px;width:40px;text-align:right;font-size:16.6px;line-height:22px;color:#000;font-weight:700;">2</div>
<div class="t" style="left:81px;top:574.25px;font-size:16.6px;line-height:22px;color:#000;font-weight:700;width:63px;text-align:center;">4</div>
<div class="t" style="left:151px;top:574.25px;font-size:16.6px;line-height:22px;color:#000;font-weight:700;">HD</div>
<svg class="r" style="left:276px;top:578.5px" width="14" height="13" viewBox="0 0 14 13"><path d="M0.3 7.6L2.3 6.4L5 9.2L11.2 0.3H13.6L6.3 12.6H4.6Z" fill="#111"/></svg>
<div class="t" style="left:293.5px;top:574.25px;font-size:16.73px;line-height:22px;color:#000;font-weight:700;">Hạng mục chung</div>
<div class="t" style="left:501px;top:574.25px;font-size:16.65px;line-height:22px;color:#000;font-weight:700;">Đào móng băng, rộng &lt;=3m, sâu</div>
<div class="t" style="left:501px;top:595.25px;font-size:17.39px;line-height:22px;color:#000;font-weight:700;">&gt;3m, đất cấp IIỉ</div>
<div class="t" style="left:769px;top:573.25px;font-size:17.48px;line-height:22px;color:#000;font-weight:700;width:62px;text-align:center;">m3</div>
<div class="t" style="left:830.5px;top:574.25px;width:95px;text-align:right;font-size:16.6px;line-height:22px;color:#000;font-weight:700;">53,768.00</div>
<div class="t" style="left:1030.3px;top:574.25px;width:95px;text-align:right;font-size:16.877413068031505px;line-height:22px;color:#000;font-weight:700;">37,637.60</div>
<div class="t" style="left:1330.5px;top:574.25px;width:95px;text-align:right;font-size:16.877413068031505px;line-height:22px;color:#000;font-weight:700;">17,922.67</div>
<div class="t" style="left:1430.3px;top:574.25px;width:95px;text-align:right;font-size:16.877413068031505px;line-height:22px;color:#000;font-weight:700;">19,714.93</div>
<div class="t" style="left:1530.2px;top:573.25px;width:95px;text-align:right;font-size:16.44px;line-height:22px;color:#000;">40.00</div>
<div class="t" style="left:26px;top:634.75px;width:40px;text-align:right;font-size:16.6px;line-height:22px;color:#000;font-weight:700;">3</div>
<div class="t" style="left:81px;top:631.25px;font-size:16.6px;line-height:22px;color:#000;font-weight:700;width:63px;text-align:center;">5</div>
<div class="t" style="left:151px;top:631.25px;font-size:16.6px;line-height:22px;color:#000;font-weight:700;">HD</div>
<svg class="r" style="left:276px;top:635.5px" width="14" height="13" viewBox="0 0 14 13"><path d="M0.3 7.6L2.3 6.4L5 9.2L11.2 0.3H13.6L6.3 12.6H4.6Z" fill="#111"/></svg>
<div class="t" style="left:293.5px;top:631.25px;font-size:16.73px;line-height:22px;color:#000;font-weight:700;">Hạng mục chung</div>
<div class="t" style="left:501px;top:631.25px;font-size:16.82px;line-height:22px;color:#000;font-weight:700;">Đào xúc đất để đắp hoặc đổ ra</div>
<div class="t" style="left:501px;top:652.25px;font-size:17.41px;line-height:22px;color:#000;font-weight:700;">bãi thải, bãi tập kết bằng máy</div>
<div class="t" style="left:501px;top:675.25px;font-size:16.92px;line-height:22px;color:#000;font-weight:700;">đào 0,8m3 + máy ủi 110CV,</div>
<div class="t" style="left:501px;top:696.25px;font-size:17.3px;line-height:22px;color:#000;font-weight:700;">phạm vi 30m, đất cấp III</div>
<div class="t" style="left:775.5px;top:631.25px;font-size:17.0px;line-height:22px;color:#000;font-weight:700;">100m3</div>
<div class="t" style="left:830.5px;top:631.25px;width:95px;text-align:right;font-size:16.6px;line-height:22px;color:#000;font-weight:700;">2,707.00</div>
<div class="t" style="left:1030.3px;top:631.25px;width:95px;text-align:right;font-size:16.877413068031505px;line-height:22px;color:#000;font-weight:700;">1,624.20</div>
<div class="t" style="left:1330.5px;top:631.25px;width:95px;text-align:right;font-size:16.877413068031505px;line-height:22px;color:#000;font-weight:700;">902.33</div>
<div class="t" style="left:1430.3px;top:631.25px;width:95px;text-align:right;font-size:16.877413068031505px;line-height:22px;color:#000;font-weight:700;">721.87</div>
<div class="t" style="left:1530.2px;top:630.25px;width:95px;text-align:right;font-size:16.44px;line-height:22px;color:#000;">40.00</div>
<div class="t" style="left:26px;top:735.75px;width:40px;text-align:right;font-size:16.6px;line-height:22px;color:#000;font-weight:700;">4</div>
<div class="t" style="left:81px;top:733.25px;font-size:16.6px;line-height:22px;color:#000;font-weight:700;width:63px;text-align:center;">6</div>
<div class="t" style="left:151px;top:733.25px;font-size:16.6px;line-height:22px;color:#000;font-weight:700;">HD</div>
<svg class="r" style="left:276px;top:737.5px" width="14" height="13" viewBox="0 0 14 13"><path d="M0.3 7.6L2.3 6.4L5 9.2L11.2 0.3H13.6L6.3 12.6H4.6Z" fill="#111"/></svg>
<div class="t" style="left:293.5px;top:733.25px;font-size:16.73px;line-height:22px;color:#000;font-weight:700;">Hạng mục chung</div>
<div class="t" style="left:501px;top:733.25px;font-size:17.08px;line-height:22px;color:#000;font-weight:700;">Bắp đất công trình bằng đầm</div>
<div class="t" style="left:501px;top:754.25px;font-size:16.38px;line-height:22px;color:#000;font-weight:700;">cóc, độ chặt K = 0,90</div>
<div class="t" style="left:775.5px;top:733.25px;font-size:17.0px;line-height:22px;color:#000;font-weight:700;">100m3</div>
<div class="t" style="left:830.5px;top:733.25px;width:95px;text-align:right;font-size:16.6px;line-height:22px;color:#000;font-weight:700;">2,638.00</div>
<div class="t" style="left:1030.3px;top:733.25px;width:95px;text-align:right;font-size:16.877413068031505px;line-height:22px;color:#000;font-weight:700;">1,582.80</div>
<div class="t" style="left:1330.5px;top:733.25px;width:95px;text-align:right;font-size:16.877413068031505px;line-height:22px;color:#000;font-weight:700;">879.33</div>
<div class="t" style="left:1430.3px;top:733.25px;width:95px;text-align:right;font-size:16.877413068031505px;line-height:22px;color:#000;font-weight:700;">703.47</div>
<div class="t" style="left:1530.2px;top:732.25px;width:95px;text-align:right;font-size:16.44px;line-height:22px;color:#000;">40.00</div>
<div class="r" style="left:1902px;top:170px;width:8px;height:608px;background:#fff;"></div>
<div class="r" style="left:1901px;top:177px;width:1px;height:601px;background:#a5bfd6;"></div>
<svg class="r" style="left:1848px;top:345px" width="62" height="62" viewBox="0 0 62 62">
<circle cx="30" cy="30" r="30" fill="#0356b8"/>
<rect x="13.5" y="15" width="33" height="36" rx="1.5" fill="#c8743a"/>
<rect x="15.5" y="17" width="29" height="32" fill="#f1f1f1"/>
<rect x="22" y="13" width="14" height="5" rx="1" fill="#b9bec4"/><circle cx="29" cy="13.5" r="2" fill="#b9bec4"/>
<g fill="#1c5fc4"><rect x="19.5" y="24.5" width="21" height="1.8"/><rect x="19.5" y="28.2" width="16" height="1.8"/><rect x="19.5" y="31.8" width="21" height="1.8"/><rect x="19.5" y="35.5" width="16" height="1.8"/><rect x="19.5" y="39.2" width="16" height="1.8"/></g>
<circle cx="44.7" cy="45.9" r="10" fill="#169a4a"/>
<path d="M44.7 40.5v10.8M39.3 45.9h10.8" stroke="#fff" stroke-width="2.2"/>
</svg>
<svg class="r" style="left:1848px;top:436px" width="62" height="62" viewBox="0 0 62 62">
<circle cx="30" cy="30" r="30" fill="#00b04f"/>
<path d="M14.2 24.8a2 2 0 0 1 2-2h17a2 2 0 0 1 2 2v12.2a2 2 0 0 1-2 2H24.5l-1.6 4.5-1-4.5H16.2a2 2 0 0 1-2-2z" fill="#3d64b8"/>
<path d="M24.2 18.3a2.5 2.5 0 0 1 2.5-2.5h17a2.5 2.5 0 0 1 2.5 2.5v11a2.5 2.5 0 0 1-2.5 2.5H37.2l-4.8 4.6 0.8-4.6h-6.5a2.5 2.5 0 0 1-2.5-2.5z" fill="#f6cb55" stroke="#2d56a0" stroke-width="0.6"/>
</svg>
<svg class="r" style="left:1848px;top:527px" width="62" height="62" viewBox="0 0 62 62">
<circle cx="30" cy="30.5" r="30" fill="#fdbe10"/>
<path d="M14 18L11.5 11.5M34 18L37 11.5" stroke="#111" stroke-width="1.2"/>
<circle cx="11" cy="11" r="2.1" fill="#2a9de0" stroke="#111" stroke-width="0.9"/><circle cx="37.5" cy="11" r="2.1" fill="#2a9de0" stroke="#111" stroke-width="0.9"/>
<path d="M32 43L38 47" stroke="#111" stroke-width="3.2"/><path d="M32 43L38 47" stroke="#9aa4aa" stroke-width="1.6"/>
<rect x="18.5" y="48" width="10" height="5" rx="1.5" fill="#6f7f88" stroke="#111" stroke-width="1"/>
<rect x="14.8" y="37" width="17.5" height="12.5" rx="3" fill="#f3f3f3" stroke="#111" stroke-width="1.3"/>
<path d="M15 45.5H32" stroke="#111" stroke-width="1"/>
<ellipse cx="24" cy="22.2" rx="14.6" ry="13.2" fill="#f6f6f6" stroke="#111" stroke-width="1.4"/>
<rect x="22" y="12.3" width="4" height="3" rx="0.6" fill="#333"/>
<rect x="12.8" y="18.5" width="22.6" height="13.2" rx="6.6" fill="#5f7480" stroke="#111" stroke-width="1.4"/>
<circle cx="18.5" cy="24.2" r="1.6" fill="#2ad2f0"/><circle cx="29.8" cy="24.2" r="1.6" fill="#2ad2f0"/>
<path d="M21.5 27q2.7 2 5.4 0" fill="none" stroke="#111" stroke-width="1.1"/>
<g stroke-linecap="round" fill="none">
<path d="M37.5 50.5L46.5 37.5" stroke="#111" stroke-width="5.6"/>
<path d="M37.5 50.5L46.5 37.5" stroke="#1e96e8" stroke-width="3.2"/>
<path d="M44 36.5a5.4 5.4 0 0 0 8.8 3.2M44.2 37a5.4 5.4 0 0 1 3.8-7" stroke="#111" stroke-width="5.2"/>
<path d="M44 36.5a5.4 5.4 0 0 0 8.8 3.2M44.2 37a5.4 5.4 0 0 1 3.8-7" stroke="#1e96e8" stroke-width="2.8"/>
</g>
</svg>
<svg class="r" style="left:385.5px;top:215.5px" width="15" height="22" viewBox="0 0 15 22">
<path d="M0.8 0.8V17.3L4.4 13.8L6.8 18.9L9.4 17.7L7.1 12.8H12.6Z" fill="#fff" stroke="#111" stroke-width="1.1" stroke-linejoin="round"/></svg>
</body></html>
